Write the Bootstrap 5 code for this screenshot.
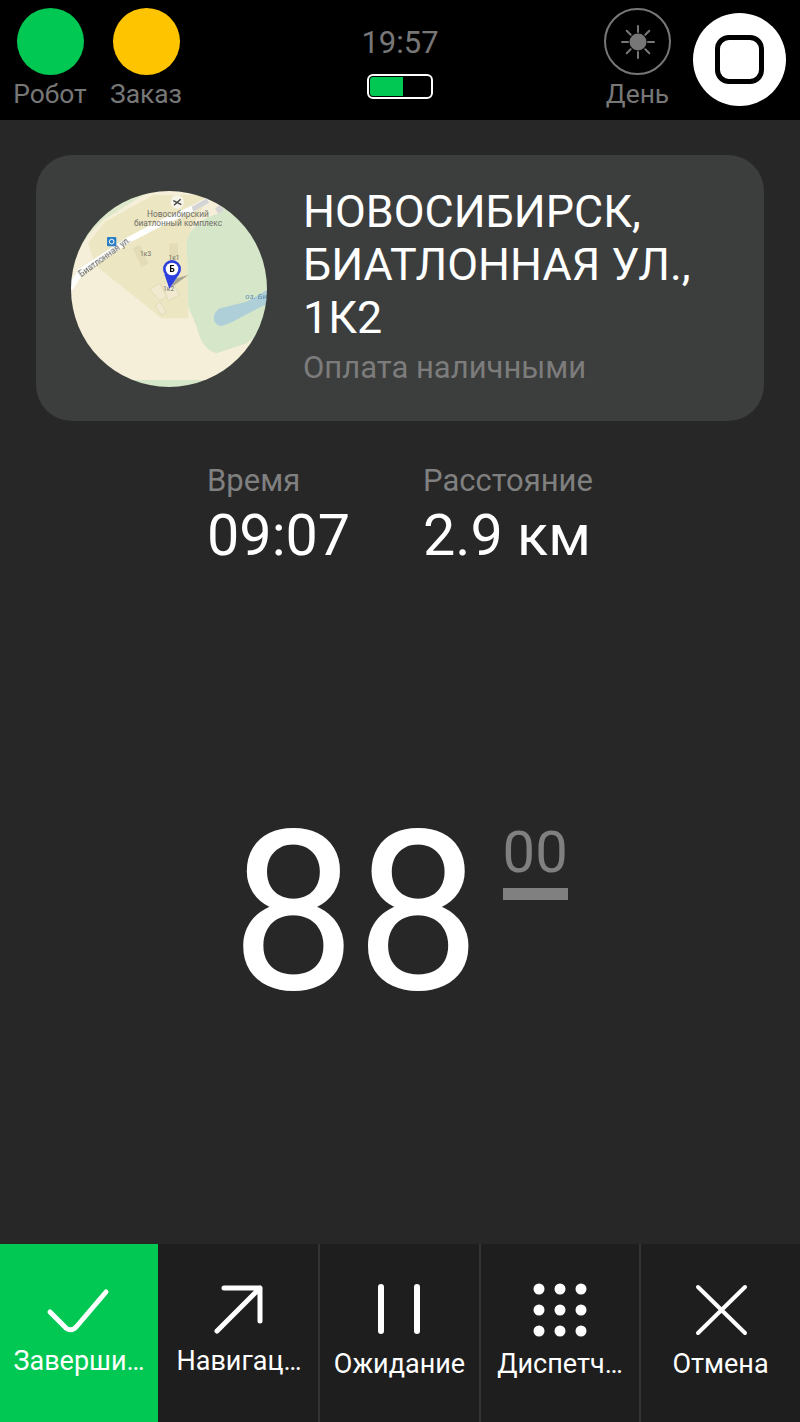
<!DOCTYPE html>
<html lang="ru">
<head>
  <meta charset="UTF-8">
  <title>Заказ</title>
  <link href="https://cdn.jsdelivr.net/npm/bootstrap@5.3.0/dist/css/bootstrap.min.css" rel="stylesheet">
  <style>
    html, body { height: 1422px; }
    body { font-family: Roboto, "Liberation Sans", sans-serif; background: #272727; color: #fff; overflow: hidden; }
    .screen { height: 1422px; }

    /* top status bar */
    .top-bar { height: 120px; background: #000; color: #777; }
    .lamp-col { width: 96px; padding-top: 8px; }
    .lamp-first { margin-left: 2px; }
    .lamp { width: 67px; height: 67px; border-radius: 50%; }
    .lamp-green { background: #00c853; }
    .lamp-yellow { background: #ffc400; }
    .lamp-day { border: 2px solid #777; }
    .lamp-text { font-size: 26.400px; line-height: 30px; margin-top: 4px; }
    .clock-col { width: 66px; padding-top: 24px; margin-left: 173px; margin-right: 171px; }
    .clock-text { font-size: 31px; line-height: 38px; white-space: nowrap; }
    .battery { width: 66px; height: 25px; border: 2px solid #fff; border-radius: 6px; margin-top: 12px; padding: 1px; }
    .battery-fill { height: 100%; background: #00c853; border-radius: 3px 0 0 3px; }
    .home-btn { width: 93px; height: 93px; background: #fff; border-radius: 50%; margin-top: 13px; margin-left: 22px; }
    .home-square { width: 49px; height: 49px; border: 5px solid #000; border-radius: 14px; }

    /* address card */
    .addr-card { height: 266px; margin: 35px 36px 0; padding: 36px 35px; background: #3c3e3d; border-radius: 36px; }
    .map-round { width: 196px; height: 196px; border-radius: 50%; overflow: hidden; }
    .map-round svg { display: block; filter: blur(.5px); }
    .addr-text { margin-left: 36px; margin-top: -6px; }
    .addr-title { font-size: 44.800px; line-height: 53px; white-space: nowrap; }
    .addr-pay { font-size: 31px; line-height: 38px; color: #7c7c7c; margin-top: 5px; }

    /* trip stats */
    .stats { margin-top: 41px; padding-left: 207px; }
    .stat-left { width: 216px; }
    .stat-label { font-size: 31px; line-height: 38px; color: #808080; }
    .stat-value { font-size: 57.500px; line-height: 72px; }

    /* meter */
    .meter { padding-left: 231px; }
    .meter-big { font-size: 222px; line-height: 260px; margin-top: 211px; }
    .meter-side { margin-left: 22px; margin-top: 251px; width: 65px; }
    .meter-small { font-size: 58px; line-height: 58px; color: #808080; }
    .meter-line { height: 12px; background: #808080; margin-top: 7px; }

    /* bottom actions */
    .action-bar { height: 178px; background: #1e1e1e; }
    .action-item { width: 160px; padding-top: 40px; border-right: 2px solid #333; font-size: 27px; }
    .action-item:last-child { border-right: 0; }
    .action-done { background: #00c853; border-right-color: #1e1e1e; }
    .action-mid { width: 161px; }
    .action-end { width: 159px; }
    .action-item svg { display: block; margin: 0 auto; overflow: visible; }
    .action-label { line-height: 30px; margin-top: 15px; white-space: nowrap; }
    .action-label-up { margin-top: 12px; }
  </style>
</head>
<body>
  <div class="screen d-flex flex-column">

    <!-- status bar -->
    <div class="top-bar d-flex">
      <div class="lamp-col lamp-first d-flex flex-column align-items-center">
        <div class="lamp lamp-green"></div>
        <div class="lamp-text">Робот</div>
      </div>
      <div class="lamp-col d-flex flex-column align-items-center">
        <div class="lamp lamp-yellow"></div>
        <div class="lamp-text">Заказ</div>
      </div>
      <div class="clock-col d-flex flex-column align-items-center">
        <div class="clock-text">19:57</div>
        <div class="battery flex-shrink-0 w-100"><div class="battery-fill" style="width: 55%"></div></div>
      </div>
      <div class="d-flex flex-column align-items-center pt-2">
        <div class="lamp lamp-day d-flex align-items-center justify-content-center">
          <svg width="36" height="36" viewBox="0 0 36 36" fill="#777" stroke="#777" stroke-width="2" stroke-linecap="round">
            <circle cx="18" cy="18" r="8.500" stroke="none"/>
            <path d="M18 2v6M18 28v6M2 18h6M28 18h6M6.700 6.700l4 4M25.300 25.300l4 4M6.700 29.300l4-4M25.300 10.700l4-4"/>
          </svg>
        </div>
        <div class="lamp-text">День</div>
      </div>
      <div class="home-btn d-flex align-items-center justify-content-center">
        <div class="home-square"></div>
      </div>
    </div>

    <!-- address -->
    <div class="addr-card d-flex">
      <div class="map-round flex-shrink-0">
        <svg width="196" height="196" viewBox="33 33 588 588" font-family="Roboto, sans-serif">
          <rect x="33" y="33" width="588" height="588" fill="#f5efd9"/>
          <path d="M33 33H270L130 120 90 160 33 240Z" fill="#dde8cb"/>
          <path d="M200 600H450V621H200Z" fill="#d6e6c9"/>
          <path d="M85 190 135 125 280 45 450 45 400 130 380 190 385 415H305L105 255Z" fill="#ece6c2"/>
          <path d="M380 190C385 150 420 115 480 100L500 33H621V440L560 490 470 520C435 510 420 480 410 440L385 380Z" fill="#d6e6c9"/>
          <path d="M621 330 560 365 480 385C455 400 455 430 480 438 505 438 560 400 621 372Z" fill="#aecfd8"/>
          <path d="M30 325 62 275 205 180 305 128 400 85 445 60" fill="none" stroke="#fff" stroke-width="18"/>
          <path d="M395 80 440 55 448 68 400 95ZM465 85 480 75 492 90 475 102Z" fill="#d5d5d5"/>
          <path d="M218 205 240 195 266 250 245 262ZM328 190H354V240H328Z" fill="#e4dcb6"/>
          <path d="M268 328 300 310 320 350 300 362ZM305 315 335 298 358 345 325 362ZM285 378 300 366 318 396 305 406Z" fill="#f1ead0" stroke="#ddd5b0" stroke-width="2"/>
          <circle cx="352" cy="66" r="20" fill="#f7f4ea"/>
          <path d="M342 76 362 58M340 62 364 74" stroke="#444" stroke-width="4" fill="none"/>
          <rect x="141" y="171" width="28" height="28" rx="3" fill="#2b7fc4"/>
          <circle cx="155" cy="185" r="7" fill="none" stroke="#fff" stroke-width="3"/>
          <g fill="#6f6f68" font-size="25" text-anchor="middle">
            <text x="354" y="110">Новосибирский</text>
            <text x="354" y="138">биатлонный комплекс</text>
            <text x="257" y="229" font-size="20">1к3</text>
            <text x="342" y="241" font-size="20">1к1</text>
            <text x="326" y="333" font-size="20">1к2</text>
          </g>
          <text x="0" y="0" font-size="26" fill="#55554f" transform="translate(64 292) rotate(-36)">Биатлонная ул.</text>
          <text x="556" y="357" font-size="24" font-style="italic" fill="#5f8fb0">оз. Би</text>
          <path d="M330 325 385 285 350 295Z" fill="#555" opacity=".45"/>
          <circle cx="336" cy="267" r="27" fill="#2e3fe0"/>
          <path d="M313 282 328 326 358 282Z" fill="#2e3fe0"/>
          <circle cx="336" cy="267" r="19" fill="#fff"/>
          <text x="336" y="276" font-size="25" font-weight="700" fill="#000" text-anchor="middle">Б</text>
        </svg>
      </div>
      <div class="addr-text">
        <div class="addr-title">НОВОСИБИРСК,<br>БИАТЛОННАЯ УЛ.,<br>1К2</div>
        <div class="addr-pay">Оплата наличными</div>
      </div>
    </div>

    <!-- stats -->
    <div class="stats d-flex">
      <div class="stat-left">
        <div class="stat-label">Время</div>
        <div class="stat-value">09:07</div>
      </div>
      <div>
        <div class="stat-label">Расстояние</div>
        <div class="stat-value">2.9 км</div>
      </div>
    </div>

    <!-- meter -->
    <div class="meter d-flex flex-grow-1">
      <div class="meter-big">88</div>
      <div class="meter-side">
        <div class="meter-small">00</div>
        <div class="meter-line"></div>
      </div>
    </div>

    <!-- actions -->
    <div class="action-bar d-flex flex-shrink-0">
      <div class="action-item action-done text-center">
        <svg width="64" height="50" viewBox="0 0 64 50" fill="none" stroke="#fff" stroke-width="5" stroke-linecap="round" stroke-linejoin="round">
          <path d="M3 28 17 42C21 47 26 47 30 42L59 8"/>
        </svg>
        <div class="action-label action-label-up">Заверши…</div>
      </div>
      <div class="action-item text-center">
        <svg width="64" height="50" viewBox="0 0 64 50" fill="none" stroke="#fff" stroke-width="5" stroke-linecap="round" stroke-linejoin="round">
          <path d="M10 47 53 4M17 4H53V37"/>
        </svg>
        <div class="action-label action-label-up">Навигац…</div>
      </div>
      <div class="action-item action-mid text-center">
        <svg width="64" height="50" viewBox="0 0 64 50" fill="#fff">
          <rect x="10" y="0" width="6" height="50" rx="3"/>
          <rect x="46" y="0" width="6" height="50" rx="3"/>
        </svg>
        <div class="action-label">Ожидание</div>
      </div>
      <div class="action-item text-center">
        <svg width="64" height="50" viewBox="0 0 64 50" fill="#fff">
          <circle cx="11" cy="5" r="5.500"/><circle cx="32" cy="5" r="5.500"/><circle cx="53" cy="5" r="5.500"/>
          <circle cx="11" cy="26" r="5.500"/><circle cx="32" cy="26" r="5.500"/><circle cx="53" cy="26" r="5.500"/>
          <circle cx="11" cy="47" r="5.500"/><circle cx="32" cy="47" r="5.500"/><circle cx="53" cy="47" r="5.500"/>
        </svg>
        <div class="action-label">Диспетч…</div>
      </div>
      <div class="action-item action-end text-center">
        <svg width="64" height="50" viewBox="0 0 64 50" fill="none" stroke="#fff" stroke-width="4" stroke-linecap="round">
          <path d="M9 3 56 49M56 3 9 49"/>
        </svg>
        <div class="action-label">Отмена</div>
      </div>
    </div>
  </div>
  <script src="https://cdn.jsdelivr.net/npm/bootstrap@5.3.0/dist/js/bootstrap.bundle.min.js"></script>
</body>
</html>
